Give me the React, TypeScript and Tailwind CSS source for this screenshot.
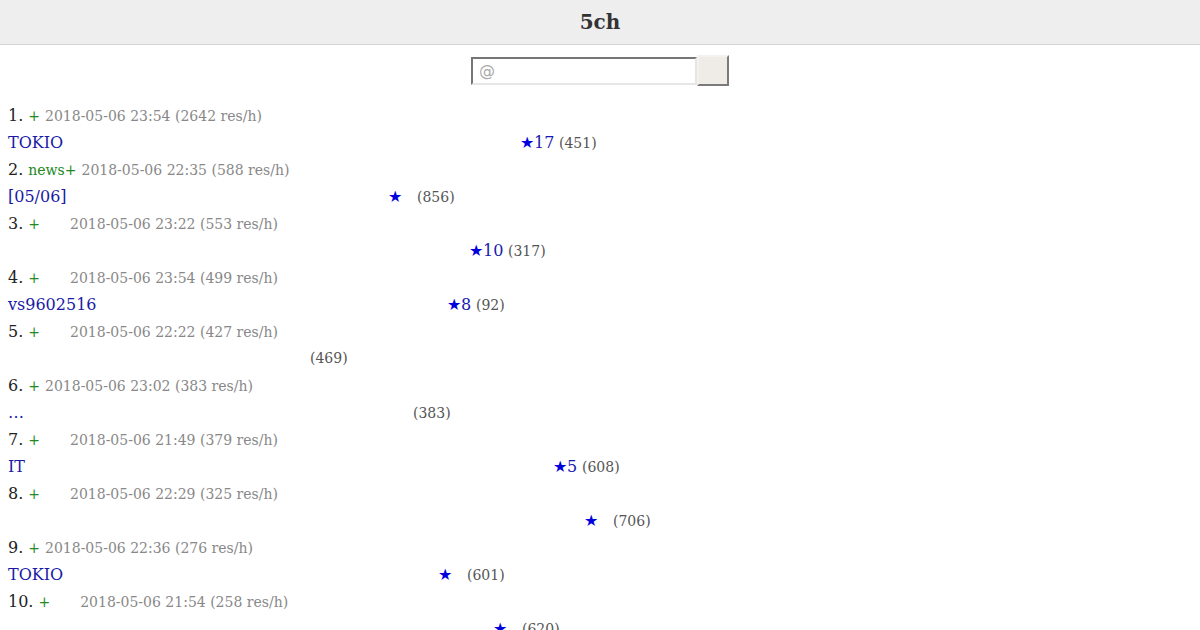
import React from "react";

type Row = {
  n: string;
  board: string;
  gap: boolean;
  date: string;
  title: string;
  starX: number | null;
  star: string;
  countX: number;
  count: string;
};

const rows: Row[] = [
  { n: "1.", board: "+", gap: false, date: "2018-05-06 23:54 (2642 res/h)", title: "TOKIO", starX: 520, star: "★17", countX: 559, count: "(451)" },
  { n: "2.", board: "news+", gap: false, date: "2018-05-06 22:35 (588 res/h)", title: "[05/06]", starX: 388, star: "★", countX: 417, count: "(856)" },
  { n: "3.", board: "+", gap: true, date: "2018-05-06 23:22 (553 res/h)", title: "", starX: 469, star: "★10", countX: 508, count: "(317)" },
  { n: "4.", board: "+", gap: true, date: "2018-05-06 23:54 (499 res/h)", title: "vs9602516", starX: 447, star: "★8", countX: 476, count: "(92)" },
  { n: "5.", board: "+", gap: true, date: "2018-05-06 22:22 (427 res/h)", title: "", starX: null, star: "", countX: 310, count: "(469)" },
  { n: "6.", board: "+", gap: false, date: "2018-05-06 23:02 (383 res/h)", title: "…", starX: null, star: "", countX: 413, count: "(383)" },
  { n: "7.", board: "+", gap: true, date: "2018-05-06 21:49 (379 res/h)", title: "IT", starX: 553, star: "★5", countX: 582, count: "(608)" },
  { n: "8.", board: "+", gap: true, date: "2018-05-06 22:29 (325 res/h)", title: "", starX: 584, star: "★", countX: 613, count: "(706)" },
  { n: "9.", board: "+", gap: false, date: "2018-05-06 22:36 (276 res/h)", title: "TOKIO", starX: 438, star: "★", countX: 467, count: "(601)" },
  { n: "10.", board: "+", gap: true, date: "2018-05-06 21:54 (258 res/h)", title: "", starX: 493, star: "★", countX: 522, count: "(620)" },
];

function Item({ r }: { r: Row }) {
  const titleW = (r.starX ?? r.countX) - 8;
  const starW = r.starX != null ? r.countX - r.starX : 0;
  return (
    <div className="leading-[27px]">
      <div className="whitespace-nowrap flex items-baseline h-[27px]">
        <span className="text-[16px] text-[#222]">{r.n}</span>
        <span className="text-[14px] text-[#228822] ml-[5px]">{r.board}</span>
        <span className={r.gap ? "text-[14px] text-[#888] ml-[30px]" : "text-[14px] text-[#888] ml-[5px]"}>{r.date}</span>
      </div>
      <div className="whitespace-nowrap flex items-baseline h-[27px]">
        <span className="text-[16px] text-[#1a1aa6] shrink-0" style={{ width: titleW }}>
          {r.title}
        </span>
        {r.starX != null ? (
          <span className="text-[16px] text-[#1a1ab0] shrink-0" style={{ width: starW }}>
            <span className="text-[#0000dd]">★</span>
            {r.star.slice(1)}
          </span>
        ) : null}
        <span className="text-[14px] text-[#555]">{r.count}</span>
      </div>
    </div>
  );
}

export default function App() {
  return (
    <div className="h-[630px] overflow-hidden bg-white" style={{ fontFamily: '"DejaVu Serif", serif' }}>
      <header className="h-[45px] bg-[#eeeeee] border-b border-[#d4d4d4] flex items-center justify-center">
        <h1 className="text-[20px] font-bold text-[#333] leading-none">5ch</h1>
      </header>
      <form className="flex justify-center items-center mt-[10px]" onSubmit={(e) => e.preventDefault()}>
        <input
          type="text"
          placeholder="@"
          className="w-[226px] h-[28px] bg-white border-2 border-t-[#767676] border-l-[#767676] border-b-[#e6e6e6] border-r-[#e6e6e6] px-[6px] text-[16px] placeholder:text-[#aaa] outline-none"
          style={{ fontFamily: '"DejaVu Sans", sans-serif' }}
        />
        <button
          type="submit"
          className="w-[32px] h-[31px] bg-[#efebe7] border-2 border-t-[#f4f2f0] border-l-[#f4f2f0] border-b-[#7a7a7a] border-r-[#7a7a7a]"
        />
      </form>
      <div className="pl-[8px] pt-[16px]">
        {rows.map((r) => (
          <Item key={r.n} r={r} />
        ))}
      </div>
    </div>
  );
}
